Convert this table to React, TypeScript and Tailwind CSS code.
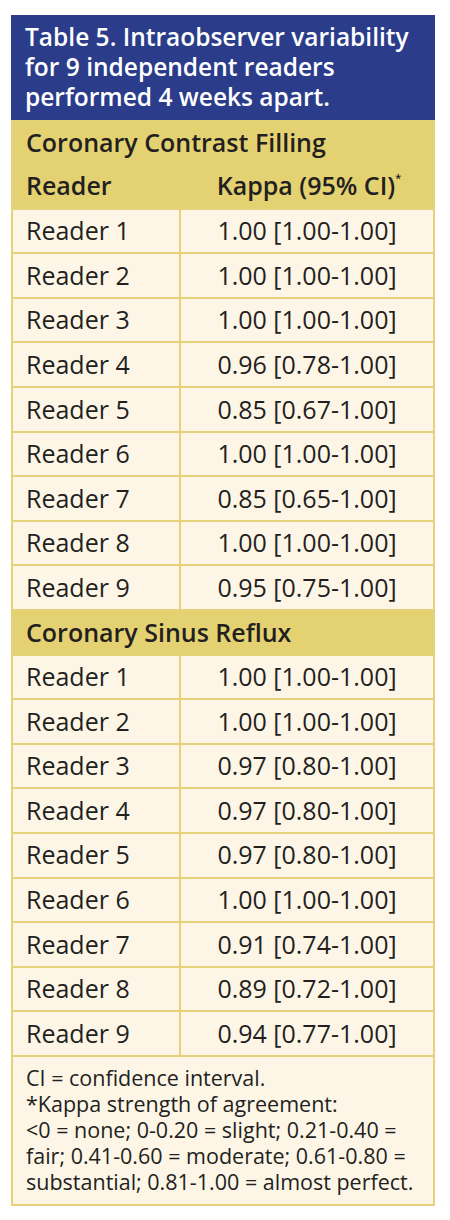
import React from 'react';

const contrast = [
  ['Reader 1', '1.00 [1.00-1.00]'],
  ['Reader 2', '1.00 [1.00-1.00]'],
  ['Reader 3', '1.00 [1.00-1.00]'],
  ['Reader 4', '0.96 [0.78-1.00]'],
  ['Reader 5', '0.85 [0.67-1.00]'],
  ['Reader 6', '1.00 [1.00-1.00]'],
  ['Reader 7', '0.85 [0.65-1.00]'],
  ['Reader 8', '1.00 [1.00-1.00]'],
  ['Reader 9', '0.95 [0.75-1.00]'],
];

const reflux = [
  ['Reader 1', '1.00 [1.00-1.00]'],
  ['Reader 2', '1.00 [1.00-1.00]'],
  ['Reader 3', '0.97 [0.80-1.00]'],
  ['Reader 4', '0.97 [0.80-1.00]'],
  ['Reader 5', '0.97 [0.80-1.00]'],
  ['Reader 6', '1.00 [1.00-1.00]'],
  ['Reader 7', '0.91 [0.74-1.00]'],
  ['Reader 8', '0.89 [0.72-1.00]'],
  ['Reader 9', '0.94 [0.77-1.00]'],
];

const Row = ({ reader, kappa }: { reader: string; kappa: string }) => (
  <div className="flex h-[44.6px] border-b-2 border-[#e5d27a] bg-[#fdf6e7] text-[25px] text-[#231f20]">
    <div className="w-[168px] flex items-center pl-[13px] border-r-2 border-[#e5d27a]">{reader}</div>
    <div className="flex-1 flex items-center justify-center">{kappa}</div>
  </div>
);

const SectionHeader = ({ title }: { title: string }) => (
  <div className="h-[44.6px] flex items-center pl-[13px] bg-[#e4d272] text-[25px] font-semibold text-[#231f20]">
    {title}
  </div>
);

export default function App() {
  return (
    <div className="w-[450px] h-[1220px] bg-white pt-[15px] pl-[11px]" style={{ fontFamily: '"Open Sans", "Liberation Sans", sans-serif' }}>
      <div className="w-[424px]">
        <div className="bg-[#2b3d8a] text-white font-semibold text-[24.5px] leading-[30px] px-[14px] pt-[7px] h-[105px]">
          Table 5. Intraobserver variability<br />
          for 9 independent readers<br />
          performed 4 weeks apart.
        </div>
        <div className="border-l-2 border-r-2 border-[#e5d27a]">
          <SectionHeader title="Coronary Contrast Filling" />
          <div className="flex h-[45px] bg-[#e4d272] text-[25px] font-semibold text-[#231f20] border-b-2 border-[#e5d27a]">
            <div className="w-[168px] flex items-center pl-[13px]">Reader</div>
            <div className="flex-1 flex items-center justify-center pl-[4px]">
              Kappa (95% CI)<sup className="text-[11px] relative -top-[8px]">*</sup>
            </div>
          </div>
          {contrast.map(([r, k]) => (
            <Row key={'c' + r} reader={r} kappa={k} />
          ))}
          <SectionHeader title="Coronary Sinus Reflux" />
          {reflux.map(([r, k]) => (
            <Row key={'r' + r} reader={r} kappa={k} />
          ))}
          <div className="bg-[#fdf6e7] border-b-2 border-[#e5d27a] px-[13px] pt-[8px] pb-[9px] text-[21.5px] leading-[26px] text-[#231f20] whitespace-nowrap">
            <p>CI = confidence interval.</p>
            <p>*Kappa strength of agreement:</p>
            <p>&lt;0 = none; 0-0.20 = slight; 0.21-0.40 =</p>
            <p>fair; 0.41-0.60 = moderate; 0.61-0.80 =</p>
            <p>substantial; 0.81-1.00 = almost perfect.</p>
          </div>
        </div>
      </div>
    </div>
  );
}
